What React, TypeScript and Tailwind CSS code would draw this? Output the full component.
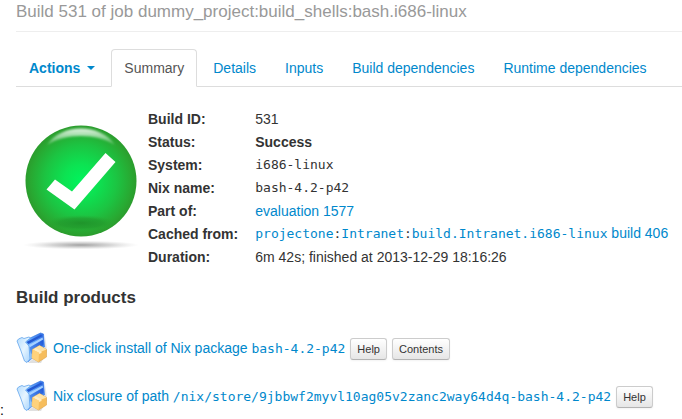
import type { ReactNode } from "react";

function Mono({ children }: { children: ReactNode }) {
  return (
    <code className="font-['DejaVu_Sans_Mono',monospace] text-[13px]">{children}</code>
  );
}

function Link({ children }: { children: ReactNode }) {
  return (
    <a href="#" className="text-[#0088cc] hover:underline">
      {children}
    </a>
  );
}

function SuccessIcon() {
  return (
    <svg viewBox="0 0 128 128" className="size-32 shrink-0" role="img" aria-label="Success">
      <defs>
        <radialGradient id="ball" cx="0.5" cy="0.5" r="0.5">
          <stop offset="0" stopColor="#00f45c" />
          <stop offset="0.3" stopColor="#0ce352" />
          <stop offset="0.65" stopColor="#1cc442" />
          <stop offset="0.9" stopColor="#28a932" />
          <stop offset="1" stopColor="#2b9c2d" />
        </radialGradient>
        <linearGradient id="shine" x1="0" y1="0" x2="0" y2="1">
          <stop offset="0" stopColor="#fff" stopOpacity="0.85" />
          <stop offset="1" stopColor="#fff" stopOpacity="0.2" />
        </linearGradient>
        <radialGradient id="floor">
          <stop offset="0" stopColor="#888" stopOpacity="0.8" />
          <stop offset="0.5" stopColor="#aaa" stopOpacity="0.5" />
          <stop offset="1" stopColor="#ccc" stopOpacity="0" />
        </radialGradient>
        <radialGradient id="under">
          <stop offset="0" stopColor="#1f9029" stopOpacity="0.9" />
          <stop offset="0.6" stopColor="#22962b" stopOpacity="0.6" />
          <stop offset="1" stopColor="#28a932" stopOpacity="0" />
        </radialGradient>
        <filter id="soft">
          <feGaussianBlur stdDeviation="0.8" />
        </filter>
      </defs>
      <ellipse cx="65" cy="121" rx="58" ry="4.500" fill="url(#floor)" />
      <circle cx="65" cy="57" r="55.500" fill="url(#ball)" />
      <ellipse cx="65" cy="99" rx="36" ry="8" fill="url(#under)" />
      <path d="M31 21C45 -1 85 -1 99 21C81 9 49 9 31 21Z" fill="url(#shine)" filter="url(#soft)" />
      <path d="M30.500 65.500L39 55.500L56 67.500L89.500 29L99.500 38L58.500 85.500Z" fill="#fff" />
    </svg>
  );
}

function PackageIcon() {
  return (
    <svg viewBox="0 0 32 32" className="size-8 shrink-0" aria-hidden="true">
      <defs>
        <linearGradient id="folder" x1="0" y1="0" x2="1" y2="1">
          <stop offset="0" stopColor="#b4dcff" />
          <stop offset="0.5" stopColor="#e6f5ff" />
          <stop offset="1" stopColor="#a5d2fc" />
        </linearGradient>
        <linearGradient id="pages" x1="1" y1="0" x2="0" y2="1">
          <stop offset="0" stopColor="#2a66e2" />
          <stop offset="0.4" stopColor="#5a9ff8" />
          <stop offset="0.7" stopColor="#8dc4ff" />
          <stop offset="1" stopColor="#c4e4ff" />
        </linearGradient>
        <linearGradient id="inner" x1="1" y1="0" x2="0" y2="1">
          <stop offset="0" stopColor="#1f55d6" />
          <stop offset="1" stopColor="#5b9df6" />
        </linearGradient>
      </defs>
      <path d="M12 31L29 17L29.500 5L31 20L25 31Z" fill="#999" opacity="0.3" />
      <path d="M8 9L24.500 1L27.500 2L28.500 15L12 30L8 24Z" fill="url(#pages)" stroke="#3a78e0" strokeWidth="0.700" />
      <path d="M10.500 10L25 2.500L26.500 4L12.500 12Z" fill="#2459d2" />
      <path d="M13 13L26.500 5.500L27 7.500L13.500 15.500Z" fill="#a5d0ff" />
      <path d="M13.500 15.500L27 8L27.500 13L15 22Z" fill="url(#inner)" />
      <path d="M1 9L2.500 7L6 5.500L8 6.500L13 5L14.500 6L9.500 10L13 14L14 27L11 30.500L8.500 29L5 19Z" fill="url(#folder)" stroke="#62a4ec" strokeWidth="0.800" />
      <path d="M16.500 17.500L23.500 13.500L30.500 17.500V25L22.500 30L16 26Z" fill="#f6bd5c" stroke="#e0a447" strokeWidth="0.600" />
      <path d="M16.500 17.500L23.500 13.500L30.500 17.500L23 20.500Z" fill="#ffe3a6" />
      <path d="M16.500 17.500L23 20.500L22.500 30L16 26Z" fill="#ffd27c" />
      <path d="M19.500 16L25.500 19.500V21L23 22V20.500L18 18Z" fill="#ffedc4" />
    </svg>
  );
}

function SmallButton({ children }: { children: ReactNode }) {
  return (
    <button
      type="button"
      className="mt-0.5 h-[22px] shrink-0 rounded-[3px] border border-[#cccccc] border-b-[#b3b3b3] bg-linear-to-b from-white to-[#e6e6e6] px-1.5 text-[11px] leading-5 text-[#333333] shadow-[0_1px_2px_rgba(0,0,0,0.05)]"
    >
      {children}
    </button>
  );
}

const tabs = ["Details", "Inputs", "Build dependencies", "Runtime dependencies"];

const facts: { label: string; value: ReactNode }[] = [
  { label: "Build ID:", value: "531" },
  { label: "Status:", value: <strong>Success</strong> },
  { label: "System:", value: <Mono>i686-linux</Mono> },
  { label: "Nix name:", value: <Mono>bash-4.2-p42</Mono> },
  { label: "Part of:", value: <Link>evaluation 1577</Link> },
  {
    label: "Cached from:",
    value: (
      <>
        <Link><Mono>projectone</Mono></Link>
        <Mono>:</Mono>
        <Link><Mono>Intranet</Mono></Link>
        <Mono>:</Mono>
        <Link><Mono>build.Intranet.i686-linux</Mono> build 406</Link>
      </>
    ),
  },
  { label: "Duration:", value: "6m 42s; finished at 2013-12-29 18:16:26" },
];

export default function App() {
  return (
    <div className="relative overflow-hidden bg-white pb-1 pl-4 font-['Liberation_Sans',Arial,sans-serif] text-sm leading-5 text-[#333333]">
      <header className="border-b border-[#eeeeee] pb-2">
        <h1 className="text-[17px] leading-[23px] whitespace-nowrap text-[#999999]">
          Build 531 of job dummy_project:build_shells:bash.i686-linux
        </h1>
      </header>

      <nav className="mt-[17px] flex gap-[3px] border-b border-[#dddddd] whitespace-nowrap">
        <button type="button" className="flex items-center gap-[7px] px-[13px] pt-[9px] pb-2 font-bold text-[#0088cc]">
          Actions
          <span className="border-x-4 border-t-4 border-x-transparent border-t-[#0088cc]" />
        </button>
        <a href="#" className="-mb-px rounded-t border border-[#dddddd] border-b-white bg-white px-3 py-2 text-[#555555]">
          Summary
        </a>
        {tabs.map((tab) => (
          <a key={tab} href="#" className="px-[13px] pt-[9px] pb-2 text-[#0088cc]">
            {tab}
          </a>
        ))}
      </nav>

      <section className="mt-5 flex items-center gap-1">
        <SuccessIcon />
        <table className="whitespace-nowrap">
          <tbody>
            {facts.map((fact) => (
              <tr key={fact.label} className="h-[23px]">
                <th scope="row" className="p-0 pr-[17px] text-left font-bold">{fact.label}</th>
                <td className="p-0">{fact.value}</td>
              </tr>
            ))}
          </tbody>
        </table>
      </section>

      <h2 className="mt-5 text-[17px] leading-5 font-bold">Build products</h2>

      <ul className="mt-4 whitespace-nowrap">
        <li className="flex h-12 items-center gap-[5px]">
          <PackageIcon />
          <Link>One-click install of Nix package <Mono>bash-4.2-p42</Mono></Link>
          <SmallButton>Help</SmallButton>
          <SmallButton>Contents</SmallButton>
        </li>
        <li className="flex h-12 items-center gap-[5px]">
          <PackageIcon />
          <Link>Nix closure of path <Mono>/nix/store/9jbbwf2myvl10ag05v2zanc2way64d4q-bash-4.2-p42</Mono></Link>
          <SmallButton>Help</SmallButton>
        </li>
      </ul>
      <span className="absolute bottom-1 left-0 text-black">:</span>
    </div>
  );
}
